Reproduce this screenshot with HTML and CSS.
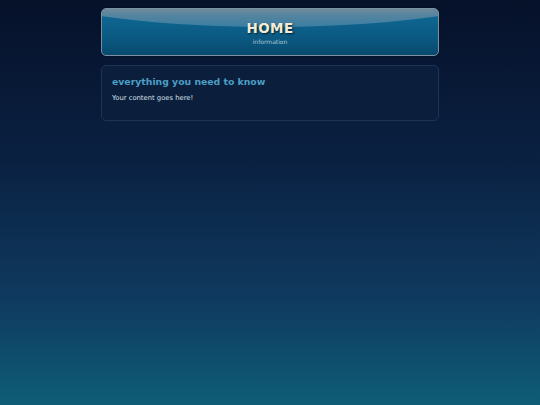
FILE: index.html
```html
<!DOCTYPE html>
<html>
<head>
<meta charset="utf-8">
<link rel="stylesheet" href="styles.css">
</head>
<body>
<div class="wrap">
  <header class="banner">
    <h1 class="title">HOME</h1>
    <p class="sub">information</p>
  </header>
  <section class="box">
    <h2 class="box-title">everything you need to know</h2>
    <p class="box-text">Your content goes here!</p>
  </section>
</div>
</body>
</html>
```

FILE: styles.css
```css
html, body {
  margin: 0;
  padding: 0;
  height: 100%;
}
body {
  background: linear-gradient(to bottom, #06112a 0%, #0a2142 40%, #0f3a5f 74%, #0e5d76 100%);
  font-family: "DejaVu Sans", Verdana, sans-serif;
  min-height: 405px;
}
.wrap {
  width: 338px;
  margin: 0 auto;
  padding-top: 8px;
  display: flex;
  flex-direction: column;
  gap: 9px;
}
.banner {
  position: relative;
  height: 46px;
  border: 1px solid #7d909e;
  border-radius: 5px;
  background: linear-gradient(to bottom, #0f6a95 0%, #0b5a83 60%, #084a6e 100%);
  overflow: hidden;
  text-align: center;
  box-shadow: 0 0 2px rgba(0,0,0,0.6);
}
.banner::before {
  content: "";
  position: absolute;
  left: -40%;
  right: -40%;
  top: -110px;
  height: 128px;
  border-radius: 50%;
  background: linear-gradient(to bottom, #7f8f9b 82%, #55849f 91%, #3a7fa3 100%);
}
.title {
  position: relative;
  margin: 11px 0 0;
  font-size: 13.5px;
  line-height: 16px;
  font-weight: bold;
  letter-spacing: 0.4px;
  color: #f2ecd6;
  text-shadow: 1px 1px 2px rgba(0,0,0,0.7);
}
.sub {
  position: relative;
  margin: 1px 0 0;
  font-size: 6px;
  line-height: 10px;
  color: #a9c7d6;
}
.box {
  background: #0b1f3c;
  border: 1px solid #1c3458;
  border-radius: 5px;
  padding: 10px 10px 14px;
  height: 30px;
}
.box-title {
  margin: 0;
  font-size: 9.3px;
  line-height: 12px;
  font-weight: bold;
  color: #4b9ec4;
}
.box-text {
  margin: 5px 0 0;
  font-size: 6.8px;
  line-height: 10px;
  color: #d6e0ea;
}
```
